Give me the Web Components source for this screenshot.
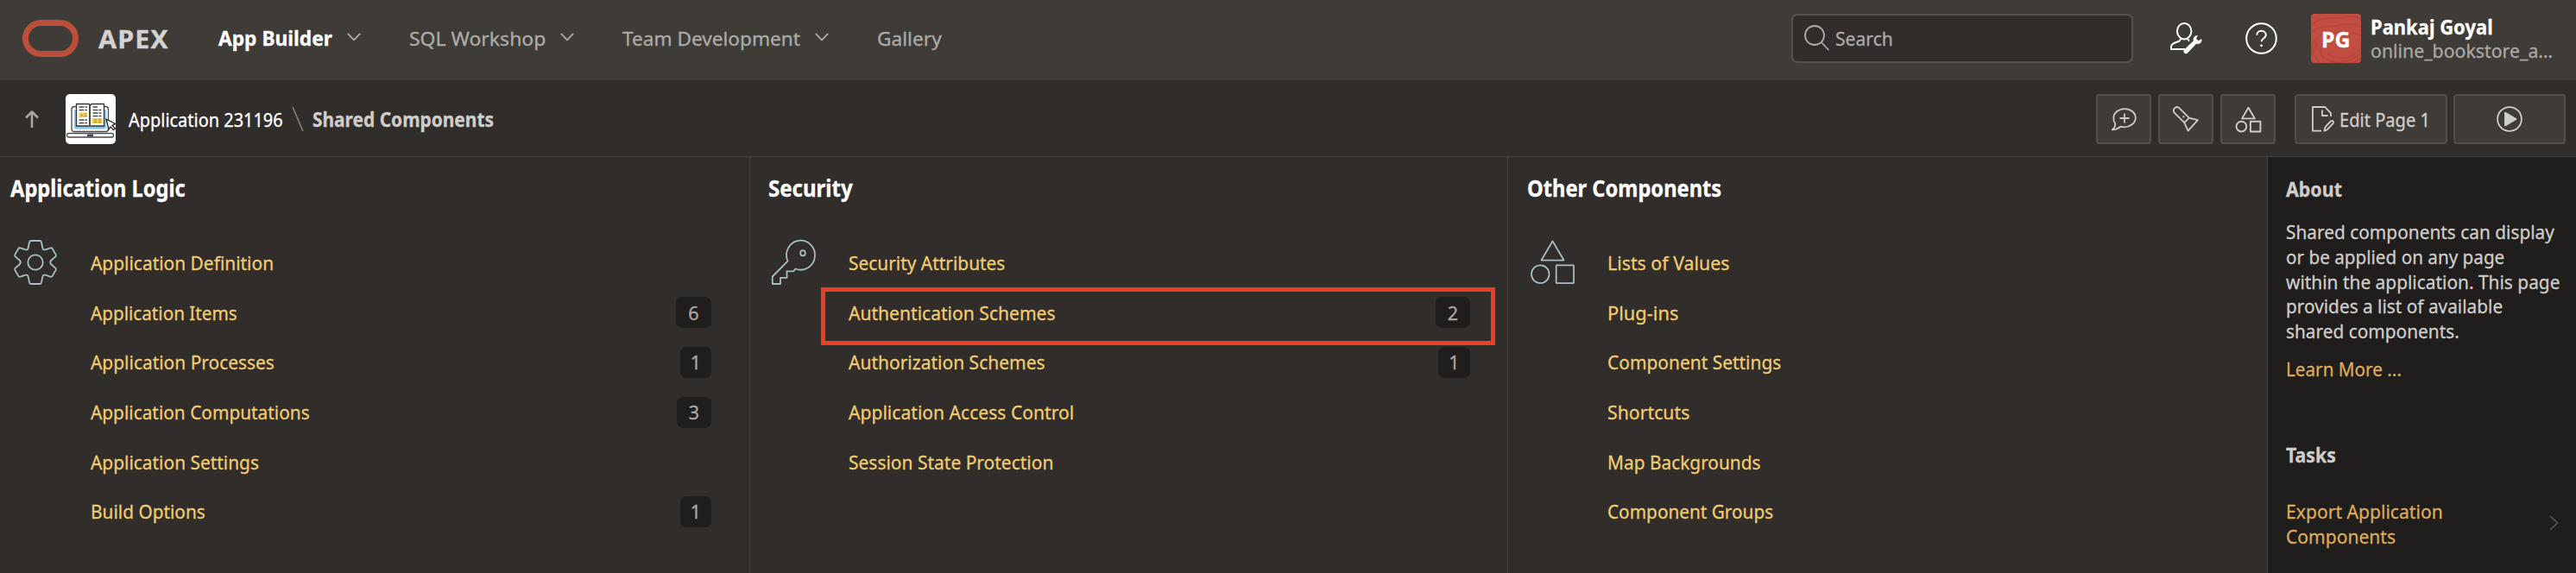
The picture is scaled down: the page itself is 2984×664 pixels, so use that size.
<!DOCTYPE html>
<html lang="en">
<head>
<meta charset="utf-8">
<title>Shared Components</title>
<style>
html,body{margin:0;height:100%;background:#312d2a}
body{font-family:"Noto Sans","Open Sans",sans-serif;font-size:22.4px;color:#fff;overflow:hidden;-webkit-text-stroke:.3px currentColor}
</style>
</head>
<body>
<apex-app></apex-app>
<script>
const icons = {
  chevron: '<svg width="16" height="10" viewBox="0 0 16 10"><path d="M.8.8 8 8.4 15.2.8"/></svg>',
  right: '<svg width="11" height="18" viewBox="0 0 11 18"><path d="M1 1 9.5 9 1 17"/></svg>',
  up: '<svg width="16" height="20" viewBox="0 0 16 20"><path d="M8 20V2M1 8.5 8 1.5 15 8.5"/></svg>',
  search: '<svg width="29" height="30" viewBox="0 0 29 30"><circle cx="12" cy="12" r="11"/><path d="M19.8 20 28.3 29"/></svg>',
  user: '<svg width="37" height="37" viewBox="0 0 37 37"><ellipse cx="16.2" cy="10.2" rx="8.2" ry="9.2"/><path d="M12 18.5c0 2.3-1 2.9-4.5 4.3C3 24.5 1 25.5 1 28.5V31h16M20.3 18.5c.2 1.6.7 2.4 1.8 3"/><path d="M31.500 15.500c-3-.6-5.500 2.400-4.200 5.700L16.500 31.400c-1.600 1.600-.7 4 1 4.500 1 .2 2-.1 2.700-.9L30 24.500c3.500 1.200 7-1.400 6-5l-3.600 2-2.700-2.700z" fill="currentColor" stroke="currentColor" stroke-width=".6"/></svg>',
  help: '<svg width="37" height="37" viewBox="0 0 37 37"><circle cx="18.500" cy="18.500" r="17.300"/><path d="M13.300 14.800c0-3 2.200-5 5.200-5s5.300 2 5.300 4.700c0 4-5.200 4-5.200 7.800"/><circle cx="18.600" cy="26.800" r="1.400" fill="currentColor" stroke="none"/></svg>',
  bubble: '<svg width="29" height="27" viewBox="0 0 29 27"><path d="M4.300 18.500C1 13.500 1.800 7.700 6 4.300c5-4.200 13-4.300 18-.3 5.200 4.200 5 11.300-.3 15.300-4 3-8.700 3.700-13.200 2.400C7.800 23.800 4.500 25.300.8 25.300c2-1.300 3.400-3.500 3.500-6.800z"/><path d="M15 6.500v11M9.500 12h11"/></svg>',
  torch: '<svg width="30" height="30" viewBox="0 0 30 30"><path d="M13.300 19.200 2 7.900C.5 6.300.5 4 2 2.400 3.700.8 6 .8 7.600 2.400L18.900 13.600M13.300 19.200l5.600-5.600 9.900 2.600L17.600 28.600z"/><circle cx="12.400" cy="12.400" r="1.100" fill="currentColor" stroke="none"/></svg>',
  shapes: '<svg viewBox="0 0 52 52"><path d="M26 1.500 39.300 24H12.700z"/><circle cx="11.500" cy="40.500" r="10.500"/><rect x="30.300" y="30" width="20.700" height="21" rx=".5"/></svg>',
  edit: '<svg width="26" height="30" viewBox="0 0 26 30"><path d="M11 28.700H1V1h14.200L22 8.200V12M12 4.500V11h6.500M14.500 28.700c.2-2.300.6-3.800 1.900-5.300l5.300-5.800c1.900-1.700 4.400.5 2.700 2.600l-5.300 5.700c-1.300 1.400-2.500 2.300-4.600 2.800z"/></svg>',
  play: '<svg width="30" height="30" viewBox="0 0 30 30"><circle cx="15" cy="15" r="13.900"/><path d="M10 7.600 22.500 15 10 22.400z" fill="currentColor"/></svg>',
  gear: '<svg width="50" height="52" viewBox="0 0 50 52"><path d="M20 1h10q1.500 0 1.900 1.500l1.500 7q.5 2.500 3 1.800l6-2q1.500-.4 2.300.9l3.900 6.700q.8 1.400-.4 2.500l-5 4.300q-2 2.300 0 4.600l5 4.300q1.200 1.100.4 2.500l-3.900 6.700q-.8 1.300-2.300.9l-6-2q-2.500-.7-3 1.800l-1.500 7Q31.500 51 30 51H20q-1.500 0-1.900-1.500l-1.500-7q-.5-2.500-3-1.800l-6 2q-1.500.4-2.300-.9L1.400 35.100q-.8-1.400.4-2.500l5-4.300q2-2.300 0-4.600l-5-4.300q-1.200-1.100-.4-2.500l3.900-6.700q.8-1.300 2.300-.9l6 2q2.500.7 3-1.800l1.500-7Q18.500 1 20 1z"/><circle cx="25" cy="26" r="8.700"/></svg>',
  key: '<svg width="51" height="52" viewBox="0 0 51 52"><path d="M18.500 24.700A16.500 17 0 1 1 27.500 33.500L25 36.300h-7.500v7.600H10V51H.8V42.500z"/><ellipse cx="36" cy="15.200" rx="2.800" ry="3.100"/></svg>'
};

function define(name, css, html, connect){
  customElements.define(name, class extends HTMLElement{
    constructor(){
      super();
      this.attachShadow({mode:'open'});
    }
    connectedCallback(){
      this.shadowRoot.innerHTML = '<style>'+css+'</style>'+(typeof html==='function'?html(this):html);
      if(connect) connect(this);
    }
  });
}

/* Single line of text condensed to the width given in its "w" attribute. */
define('fit-text',
  ':host{display:block;white-space:nowrap;flex:none}span{display:inline-block;transform-origin:0 50%}',
  '<span><slot></slot></span>',
  el=>{
    const w=parseFloat(el.getAttribute('w')), s=el.shadowRoot.querySelector('span');
    el.style.width=w+'px';
    s.style.transform='scaleX('+(w/s.offsetWidth).toFixed(4)+')';
  });

define('ui-icon',
  ':host{display:block;flex:none}svg{display:block;fill:none;stroke:currentColor;stroke-width:var(--stroke,1.800px);stroke-linejoin:round;overflow:visible}svg:not([width]){width:100%;height:100%}',
  el=>icons[el.getAttribute('name')]);

define('nav-item',
  ':host{display:flex;align-items:center;color:#adaba8;margin-right:56px}:host([active]){color:#fff;font-weight:700}ui-icon{margin:-3px 0 0 17px;color:#adaba8}',
  el=>'<fit-text w="'+el.getAttribute('w')+'">'+el.getAttribute('label')+'</fit-text>'+(el.hasAttribute('menu')?'<ui-icon name="chevron"></ui-icon>':''));

define('apex-header',
  `:host{display:flex;align-items:center;height:93px;background:#3f3b36;box-sizing:border-box;padding:0 0 4px 26px}
  .logo{width:65px;height:43px;box-sizing:border-box;border:7.500px solid #bb4f3c;border-radius:22px;flex:none}
  .brand{margin:0 57px 0 23px;font-weight:700;font-size:29px;color:#d5d3d1;letter-spacing:1px}
  nav{display:flex;flex:1}
  .search{display:flex;box-sizing:border-box;width:396px;height:57px;border:2px solid #55514d;border-radius:7px;background:#312d2a;align-items:center;padding-left:13px;color:#adaba8;margin-right:43px}
  .search ui-icon{margin:-2px 7px 0 0}
  .tool{--stroke:2px;margin-right:50px}.help{margin-right:39px}
  .avatar{position:relative;width:58px;height:57px;border-radius:4px;background:#c34e41;overflow:hidden;display:flex;align-items:center;justify-content:center;font-weight:700;font-size:25px}
  .avatar svg{position:absolute;inset:0;fill:none;stroke:#b2473b;stroke-width:2.200;opacity:.75}
  .avatar fit-text{position:relative}
  .who{margin:1px 27px 0 11px;line-height:28px}.name{font-weight:700;font-size:24px}.sub{color:#aaa8a5}`,
  `<div class="logo"></div><fit-text class="brand" w="82">APEX</fit-text>
  <nav><nav-item label="App Builder" w="132" active menu></nav-item><nav-item label="SQL Workshop" w="158" menu></nav-item><nav-item label="Team Development" w="206" menu></nav-item><nav-item label="Gallery" w="75"></nav-item></nav>
  <div class="search"><ui-icon name="search"></ui-icon><fit-text w="67">Search</fit-text></div>
  <ui-icon class="tool" name="user"></ui-icon><ui-icon class="tool help" name="help"></ui-icon>
  <div class="avatar"><svg width="58" height="57"><path d="M-2 16C8 2 22 6 31 5s18-6 30 4M-2 26C6 12 18 16 28 14s20-4 32 2M8 42C2 28 10 22 22 22s28-2 38 4M2 49C-3 36 4 30 8 28M10 57c-8-8-9-18-2-22M16 52c-6-5-7-14 0-19M20 47c14 8 28 4 40-8M18 53c16 8 32 0 42-10M26 59c14 2 24-2 34-9"/></svg><fit-text w="34">PG</fit-text></div>
  <div class="who"><fit-text class="name" w="142">Pankaj Goyal</fit-text><fit-text class="sub" w="211">online_bookstore_a…</fit-text></div>`);

define('tool-button',
  ':host{display:flex;box-sizing:border-box;height:58px;width:64px;border:2px solid #524e4a;border-radius:4px;background:#3f3b36;color:#d0cecb;align-items:center;justify-content:center;flex:none}',
  '<slot></slot>');

define('app-thumb',
  ':host{display:block;width:58px;height:58px;border-radius:5px;background:#fff;overflow:hidden;flex:none}svg{display:block}',
  `<svg width="58" height="58" viewBox="0 0 58 58" fill="none" stroke="#4a4a4c" stroke-width="1.300">
  <rect x="7" y="14.500" width="42.500" height="29" rx="3" fill="#fff"/><path d="M10 18h37v20q0 2.500-2.500 2.500h-32Q10 40.500 10 38z" fill="#83c7ed" stroke="none"/>
  <path d="M12.500 11.500H27l1.500 1.500 1.500-1.500h14.500v25.500h-32z" fill="#fff" stroke="#333"/><path d="M28 13v23" stroke-width="2"/>
  <path d="M15.500 15H25M15.500 18.500H25M15.500 30H25M15.500 33.500H25M31.500 15H37M31.500 18.500h10M31.500 22h10M31.500 25.500h10" stroke-dasharray="6 1"/>
  <path d="M15.500 21.500h9.500v5.500h-9.500zM30.500 28h12v6h-12z" fill="#f2ca55" stroke="none"/><path d="M18 24.500h2M22 23h2M22 25.500h2M33 30h3M38 30h3M33 32.500h3M38 32.500h3" stroke="#9a8445" stroke-width="1"/>
  <rect x="1.500" y="45.500" width="54" height="4.500" rx="2" fill="#fff"/><path d="M25 48h7" stroke-width="3"/>
  <path d="M47 29 57.500 34.500 54 36.500 57.500 40 55.500 41.500 52 38 50 41z" fill="#fff" stroke="#222"/></svg>`);

define('apex-toolbar',
  `:host{display:flex;align-items:center;height:89px;box-sizing:border-box;border-bottom:1px solid #45413d;padding:2px 12px 0 29px;background:#312d2a}
  .up{color:#a9a6a3;margin-right:31px;--stroke:2.500px}
  .app{margin-left:15px}.slash{margin:0 10px;color:#7b7875;flex:none}.here{font-weight:700;color:#d0cecb;flex:1}
  .group{display:flex;gap:8px}.wide{width:177px;margin-left:14px}.run{width:130px;margin-left:-1px}
  .shapes{width:29px;height:29px;--stroke:3.400px}.edit{margin-right:6px}`,
  `<ui-icon class="up" name="up"></ui-icon><app-thumb></app-thumb><fit-text class="app" w="179">Application 231196</fit-text>
  <svg class="slash" width="14" height="28"><path d="M1 0 13 28" stroke="currentColor" stroke-width="1.800"/></svg>
  <fit-text class="here" w="210">Shared Components</fit-text>
  <div class="group"><tool-button><ui-icon name="bubble"></ui-icon></tool-button><tool-button><ui-icon name="torch"></ui-icon></tool-button><tool-button><ui-icon class="shapes" name="shapes"></ui-icon></tool-button>
  <tool-button class="wide"><ui-icon class="edit" name="edit"></ui-icon><fit-text w="105">Edit Page 1</fit-text></tool-button><tool-button class="run"><ui-icon name="play"></ui-icon></tool-button></div>`);

define('link-row',
  `:host{display:flex;align-items:center;justify-content:space-between;height:57.600px;position:relative;color:#f0cc71}
  .badge{display:flex;align-items:center;justify-content:center;box-sizing:border-box;height:36px;border-radius:7px;background:#201e1c;color:#a9a7a4;font-size:21.500px}
  .mark{position:absolute;left:-32px;right:-29px;top:-1px;height:67px;box-sizing:border-box;border:5px solid #ea3f25}`,
  el=>{
    const n=el.getAttribute('count');
    return '<fit-text w="'+el.getAttribute('w')+'">'+el.getAttribute('label')+'</fit-text>'
      +(n?'<span class="badge" style="width:'+el.getAttribute('bw')+'px">'+n+'</span>':'')
      +(el.hasAttribute('marked')?'<span class="mark"></span>':'');
  });

define('component-group',
  `:host{display:block;box-sizing:border-box;border-right:1px solid #45413d}
  h2{margin:0 0 22px;font-size:26px;font-weight:700;line-height:72px;height:72px}
  .body{display:grid;grid-template-columns:93px 1fr}
  .icon{margin:2px 0 0 4px;color:#a9bfc0;--stroke:1.800px}
  .icon[name=shapes]{width:51px;height:51px}`,
  el=>'<h2><fit-text w="'+el.getAttribute('w')+'">'+el.getAttribute('heading')+'</fit-text></h2><div class="body"><ui-icon class="icon" name="'+el.getAttribute('icon')+'"></ui-icon><div><slot></slot></div></div>');

define('side-panel',
  `:host{display:block;background:#201e1c;color:#cfcdca;padding:21px 18px 0 21px}
  h3{margin:0;font-size:22.400px;line-height:34px;font-weight:700}
  .text{line-height:28.800px;margin-top:18px}
  .link{color:#dcab5c}.more{line-height:28.800px;margin-top:15px}.tasks{margin-top:68px}
  .task{display:flex;justify-content:space-between;align-items:center;line-height:28.800px;margin-top:34px}
  .task ui-icon{color:#5c5956;margin:-3px 2px 0 0;--stroke:1.600px}`,
  `<h3><fit-text w="65">About</fit-text></h3>
  <div class="text"><fit-text w="311">Shared components can display</fit-text><fit-text w="253">or be applied on any page</fit-text><fit-text w="317">within the application. This page</fit-text><fit-text w="251">provides a list of available</fit-text><fit-text w="201">shared components.</fit-text></div>
  <fit-text class="link more" w="134">Learn More ...</fit-text>
  <h3 class="tasks"><fit-text w="58">Tasks</fit-text></h3>
  <div class="task"><div class="link"><fit-text w="182">Export Application</fit-text><fit-text w="127">Components</fit-text></div><ui-icon name="right"></ui-icon></div>`);

define('apex-app',
  `:host{display:grid;grid-template-rows:93px 89px 1fr;height:100vh}
  main{display:grid;grid-template-columns:869px 878px 880px 1fr;min-height:0}
  .a{padding:0 44px 0 12px}.b{padding:0 43px 0 21px}.c{padding:0 40px 0 22px}`,
  `<apex-header></apex-header><apex-toolbar></apex-toolbar><main>
  <component-group class="a" heading="Application Logic" w="203" icon="gear">
    <link-row label="Application Definition" w="212"></link-row>
    <link-row label="Application Items" w="170" count="6" bw="41"></link-row>
    <link-row label="Application Processes" w="213" count="1" bw="36"></link-row>
    <link-row label="Application Computations" w="254" count="3" bw="40"></link-row>
    <link-row label="Application Settings" w="195"></link-row>
    <link-row label="Build Options" w="133" count="1" bw="36"></link-row>
  </component-group>
  <component-group class="b" heading="Security" w="98" icon="key">
    <link-row label="Security Attributes" w="181"></link-row>
    <link-row label="Authentication Schemes" w="240" count="2" bw="40" marked></link-row>
    <link-row label="Authorization Schemes" w="228" count="1" bw="37"></link-row>
    <link-row label="Application Access Control" w="261"></link-row>
    <link-row label="Session State Protection" w="237"></link-row>
  </component-group>
  <component-group class="c" heading="Other Components" w="225" icon="shapes">
    <link-row label="Lists of Values" w="141"></link-row>
    <link-row label="Plug-ins" w="82"></link-row>
    <link-row label="Component Settings" w="201"></link-row>
    <link-row label="Shortcuts" w="95"></link-row>
    <link-row label="Map Backgrounds" w="178"></link-row>
    <link-row label="Component Groups" w="192"></link-row>
  </component-group>
  <side-panel></side-panel></main>`);
</script>
</body>
</html>
